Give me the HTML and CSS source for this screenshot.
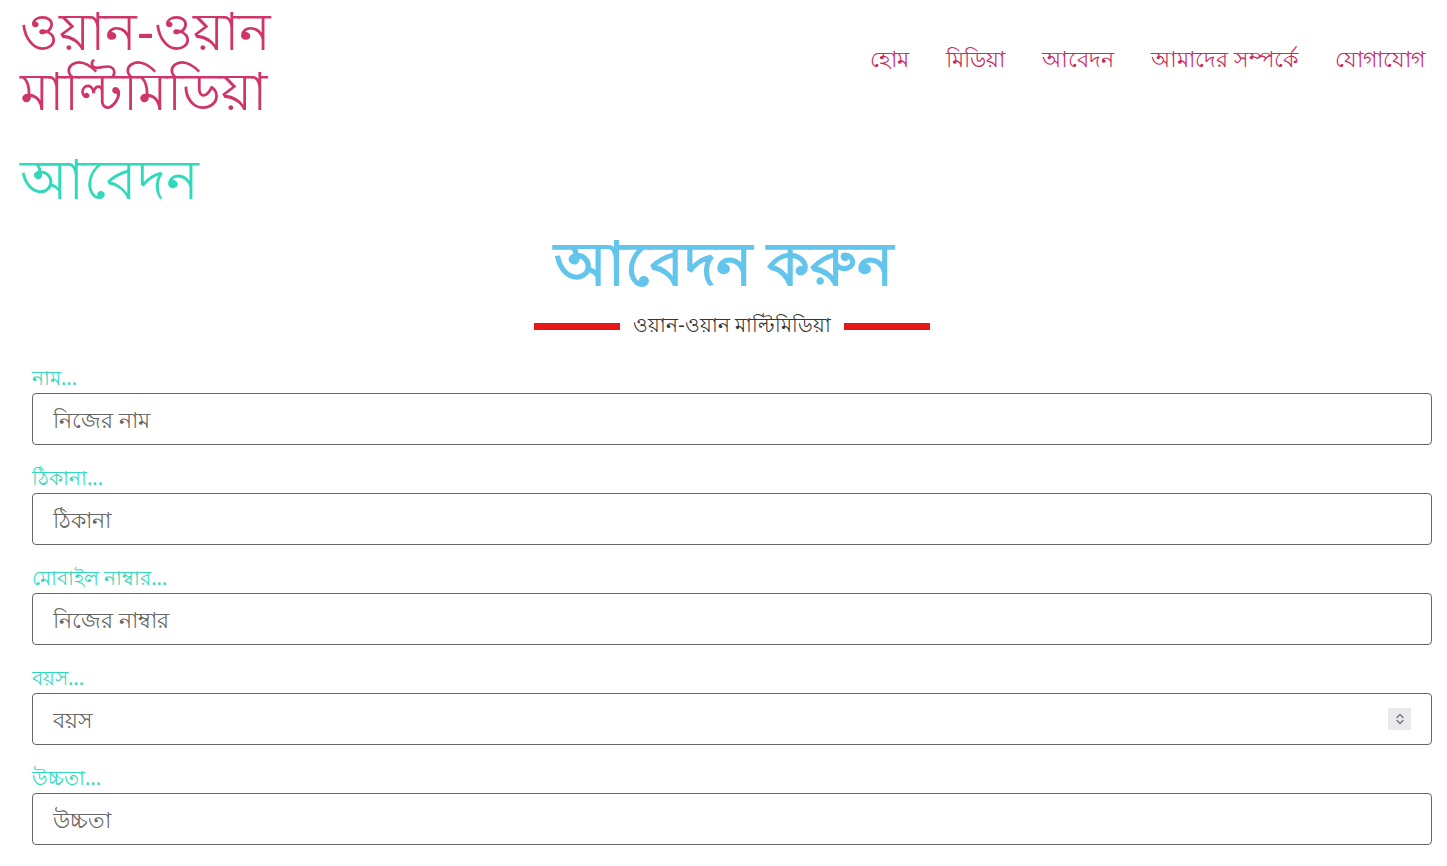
FILE: index.html
```html
<!DOCTYPE html>
<html lang="bn">
<head>
<meta charset="utf-8">
<title>আবেদন</title>
<link rel="stylesheet" href="styles.css">
</head>
<body>
<header class="top">
  <div class="logo"><span class="logo-line">ওয়ান-ওয়ান</span><span class="logo-line">মাল্টিমিডিয়া</span></div>
  <nav class="nav">
    <a href="#">হোম</a>
    <a href="#">মিডিয়া</a>
    <a href="#">আবেদন</a>
    <a href="#">আমাদের সম্পর্কে</a>
    <a href="#">যোগাযোগ</a>
  </nav>
</header>
<h1 class="page-title">আবেদন</h1>
<section class="intro">
  <h2 class="intro-title">আবেদন করুন</h2>
  <div class="divider"><span class="bar"></span><span class="divider-text">ওয়ান-ওয়ান মাল্টিমিডিয়া</span><span class="bar"></span></div>
</section>
<form class="form">
  <label class="field"><span class="label">নাম...</span><input class="input" type="text" placeholder="নিজের নাম"></label>
  <label class="field"><span class="label">ঠিকানা...</span><input class="input" type="text" placeholder="ঠিকানা"></label>
  <label class="field"><span class="label">মোবাইল নাম্বার...</span><input class="input" type="text" placeholder="নিজের নাম্বার"></label>
  <label class="field"><span class="label">বয়স...</span>
    <span class="num-wrap"><input class="input" type="number" placeholder="বয়স"><span class="spin"><svg width="12" height="16" viewBox="0 0 12 16"><path d="M3 6.5 6 3.5 9 6.5M3 9.5 6 12.5 9 9.5" fill="none" stroke="#77777f" stroke-width="1.4" stroke-linecap="round" stroke-linejoin="round"/></svg></span></span>
  </label>
  <label class="field"><span class="label">উচ্চতা...</span><input class="input" type="text" placeholder="উচ্চতা"></label>
</form>
</body>
</html>
```
FILE: styles.css
```css
* { box-sizing: border-box; }
body {
  margin: 0;
  font-family: "Noto Sans", "Liberation Sans", sans-serif;
  background: #fff;
}
.top {
  display: flex;
  justify-content: space-between;
  align-items: center;
  padding: 0 20px;
}
.logo {
  display: flex;
  flex-direction: column;
  color: #cf3567;
  font-size: 53px;
  line-height: 60px;
}
.logo-line {
  display: block;
  height: 60px;
}
.nav {
  display: flex;
  gap: 37px;
  padding-right: 2px;
}
.nav a {
  color: #c82a5c;
  font-size: 22px;
  text-decoration: none;
}
.page-title {
  margin: 28px 0 0 20px;
  color: #2fd9bb;
  font-size: 55px;
  font-weight: normal;
  line-height: 60px;
}
.intro {
  text-align: center;
}
.intro-title {
  margin: 18px 0 0;
  color: #64c5ec;
  font-size: 61px;
  font-weight: bold;
  line-height: 72px;
}
.divider {
  display: flex;
  justify-content: center;
  align-items: center;
  gap: 13px;
  margin-top: 12px;
  padding-left: 17px;
}
.bar {
  width: 86px;
  height: 7px;
  background: #e81717;
}
.divider-text {
  color: #333;
  font-size: 20px;
}
.form {
  padding: 20px 15px 0 32px;
  display: flex;
  flex-direction: column;
  gap: 18px;
}
.field {
  display: flex;
  flex-direction: column;
}
.label {
  color: #2fd9bb;
  font-size: 20px;
  line-height: 30px;
}
.input {
  width: 100%;
  height: 52px;
  border: 1px solid #666;
  border-radius: 4px;
  padding: 0 20px;
  font-size: 22px;
  font-family: inherit;
  color: #333;
  background: #fff;
}
.input::placeholder { color: #666; }
.input::-webkit-inner-spin-button,
.input::-webkit-outer-spin-button { -webkit-appearance: none; margin: 0; }
.num-wrap {
  position: relative;
  display: block;
}
.spin {
  position: absolute;
  right: 21px;
  top: 15px;
  width: 23px;
  height: 22px;
  background: #e9e9ee;
  display: flex;
  align-items: center;
  justify-content: center;
}
```
